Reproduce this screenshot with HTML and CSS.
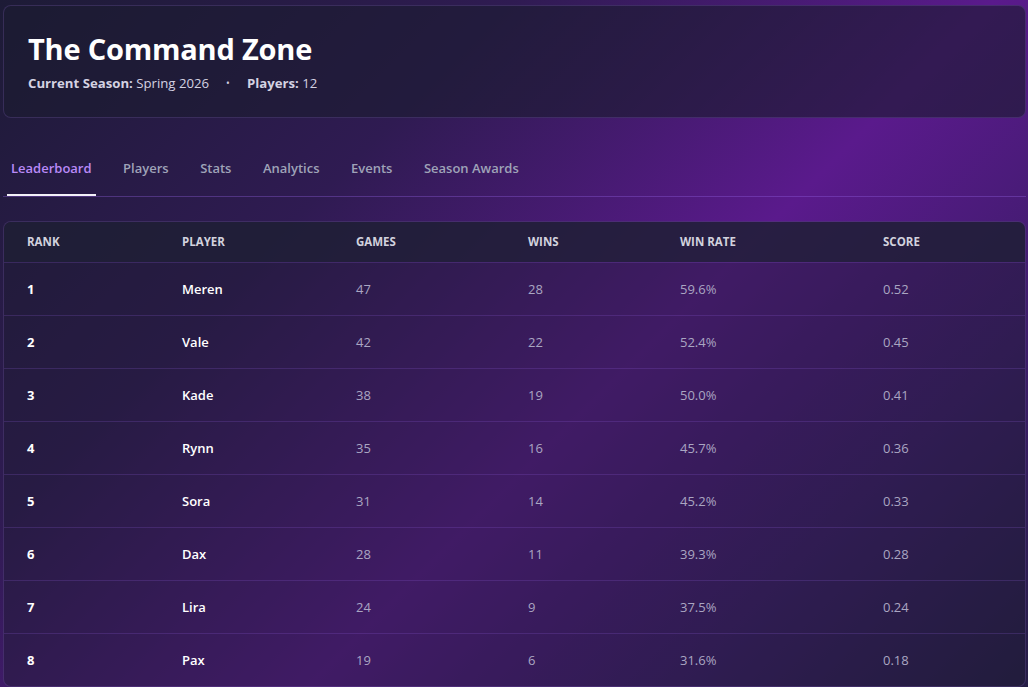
FILE: index.html
```html
<!DOCTYPE html>
<html lang="en">
<head>
  <meta charset="UTF-8" />
  <meta name="viewport" content="width=device-width, initial-scale=1.0"/>
  <title>The Command Zone</title>
  <link rel="stylesheet" href="styles.css">
</head>
<body>

  <div class="app">
    <header class="league-header">
      <h1>The Command Zone</h1>
      <div class="league-meta">
        <span><strong>Current Season:</strong> Spring 2026</span>
        <span class="dot">•</span>
        <span><strong>Players:</strong> 12</span>
      </div>
    </header>

    <nav class="tabs">
      <button class="tab active">Leaderboard</button>
      <button class="tab">Players</button>
      <button class="tab">Stats</button>
      <button class="tab">Analytics</button>
      <button class="tab">Events</button>
      <button class="tab">Season Awards</button>
    </nav>

    <div class="table-card">
      <table class="leaderboard">
        <thead>
          <tr>
            <th class="col-rank">Rank</th>
            <th class="col-player">Player</th>
            <th class="col-games">Games</th>
            <th class="col-wins">Wins</th>
            <th class="col-rate">Win Rate</th>
            <th>Score</th>
          </tr>
        </thead>
        <tbody>
          <tr><td class="rank">1</td><td class="name">Meren</td><td>47</td><td>28</td><td>59.6%</td><td>0.52</td></tr>
          <tr><td class="rank">2</td><td class="name">Vale</td><td>42</td><td>22</td><td>52.4%</td><td>0.45</td></tr>
          <tr><td class="rank">3</td><td class="name">Kade</td><td>38</td><td>19</td><td>50.0%</td><td>0.41</td></tr>
          <tr><td class="rank">4</td><td class="name">Rynn</td><td>35</td><td>16</td><td>45.7%</td><td>0.36</td></tr>
          <tr><td class="rank">5</td><td class="name">Sora</td><td>31</td><td>14</td><td>45.2%</td><td>0.33</td></tr>
          <tr><td class="rank">6</td><td class="name">Dax</td><td>28</td><td>11</td><td>39.3%</td><td>0.28</td></tr>
          <tr><td class="rank">7</td><td class="name">Lira</td><td>24</td><td>9</td><td>37.5%</td><td>0.24</td></tr>
          <tr><td class="rank">8</td><td class="name">Pax</td><td>19</td><td>6</td><td>31.6%</td><td>0.18</td></tr>
        </tbody>
      </table>
    </div>
  </div>

</body>
</html>
```

FILE: styles.css
```css
* {
  box-sizing: border-box;
}
body {
  margin: 0;
  font-family: 'Open Sans', 'Noto Sans', sans-serif;
  color: #f1f0f8;
  background: linear-gradient(135deg, #1d1b36 0%, #2f1b52 30%, #5a1a8c 58%, #3d1c6a 80%, #251d45 100%);
  background-attachment: fixed;
  min-height: 100vh;
}
.app {
  padding: 5px 2px 0 3px;
}
.league-header {
  background: rgba(28, 28, 48, 0.62);
  border: 1px solid rgba(150, 110, 220, 0.22);
  border-radius: 8px;
  padding: 25px 24px 24px;
  height: 113px;
}
.league-header h1 {
  margin: 0;
  font-size: 29px;
  font-weight: 700;
  line-height: 36px;
  color: #ffffff;
  letter-spacing: -0.2px;
}
.league-meta {
  margin-top: 7px;
  font-size: 13.2px;
  color: #d4d2e2;
  display: flex;
  gap: 17px;
}
.league-meta strong {
  font-weight: 700;
}
.dot {
  font-size: 10px;
  line-height: 19px;
}
.tabs {
  display: flex;
  gap: 23.5px;
  margin-top: 28px;
  border-bottom: 1px solid rgba(150, 100, 230, 0.35);
}
.tab {
  font-family: inherit;
  font-size: 13px;
  font-weight: 600;
  color: #9fa3b8;
  background: none;
  border: none;
  padding: 12px 4px 16px;
  margin-left: 4px;
  line-height: 20px;
  border-bottom: 2px solid transparent;
  cursor: pointer;
}
.tab + .tab {
  margin-left: 0;
}
.tab.active {
  color: #b98af7;
  border-bottom-color: #f3f1f8;
}
.table-card {
  margin-top: 24px;
  background: rgba(28, 28, 48, 0.42);
  border: 1px solid rgba(150, 110, 220, 0.22);
  border-radius: 8px;
  overflow: hidden;
}
.leaderboard {
  width: 100%;
  border-collapse: collapse;
  table-layout: fixed;
}
.leaderboard th {
  text-align: left;
  font-size: 11.5px;
  font-weight: 700;
  text-transform: uppercase;
  color: #d2d2de;
  background: rgba(30, 32, 52, 0.72);
  height: 40px;
  padding: 0 23px;
  border-bottom: 1px solid rgba(150, 100, 230, 0.2);
}
.col-rank { width: 155px; }
.col-player { width: 174px; }
.col-games { width: 172px; }
.col-wins { width: 152px; }
.col-rate { width: 203px; }
.leaderboard td {
  height: 53px;
  padding: 0 23px;
  font-size: 13px;
  color: #aaa6c2;
  border-bottom: 1px solid rgba(150, 100, 230, 0.2);
}
.leaderboard tr:last-child td {
  border-bottom: none;
}
.leaderboard td.rank {
  color: #ffffff;
  font-weight: 700;
}
.leaderboard td.name {
  color: #ffffff;
  font-weight: 600;
}
```
